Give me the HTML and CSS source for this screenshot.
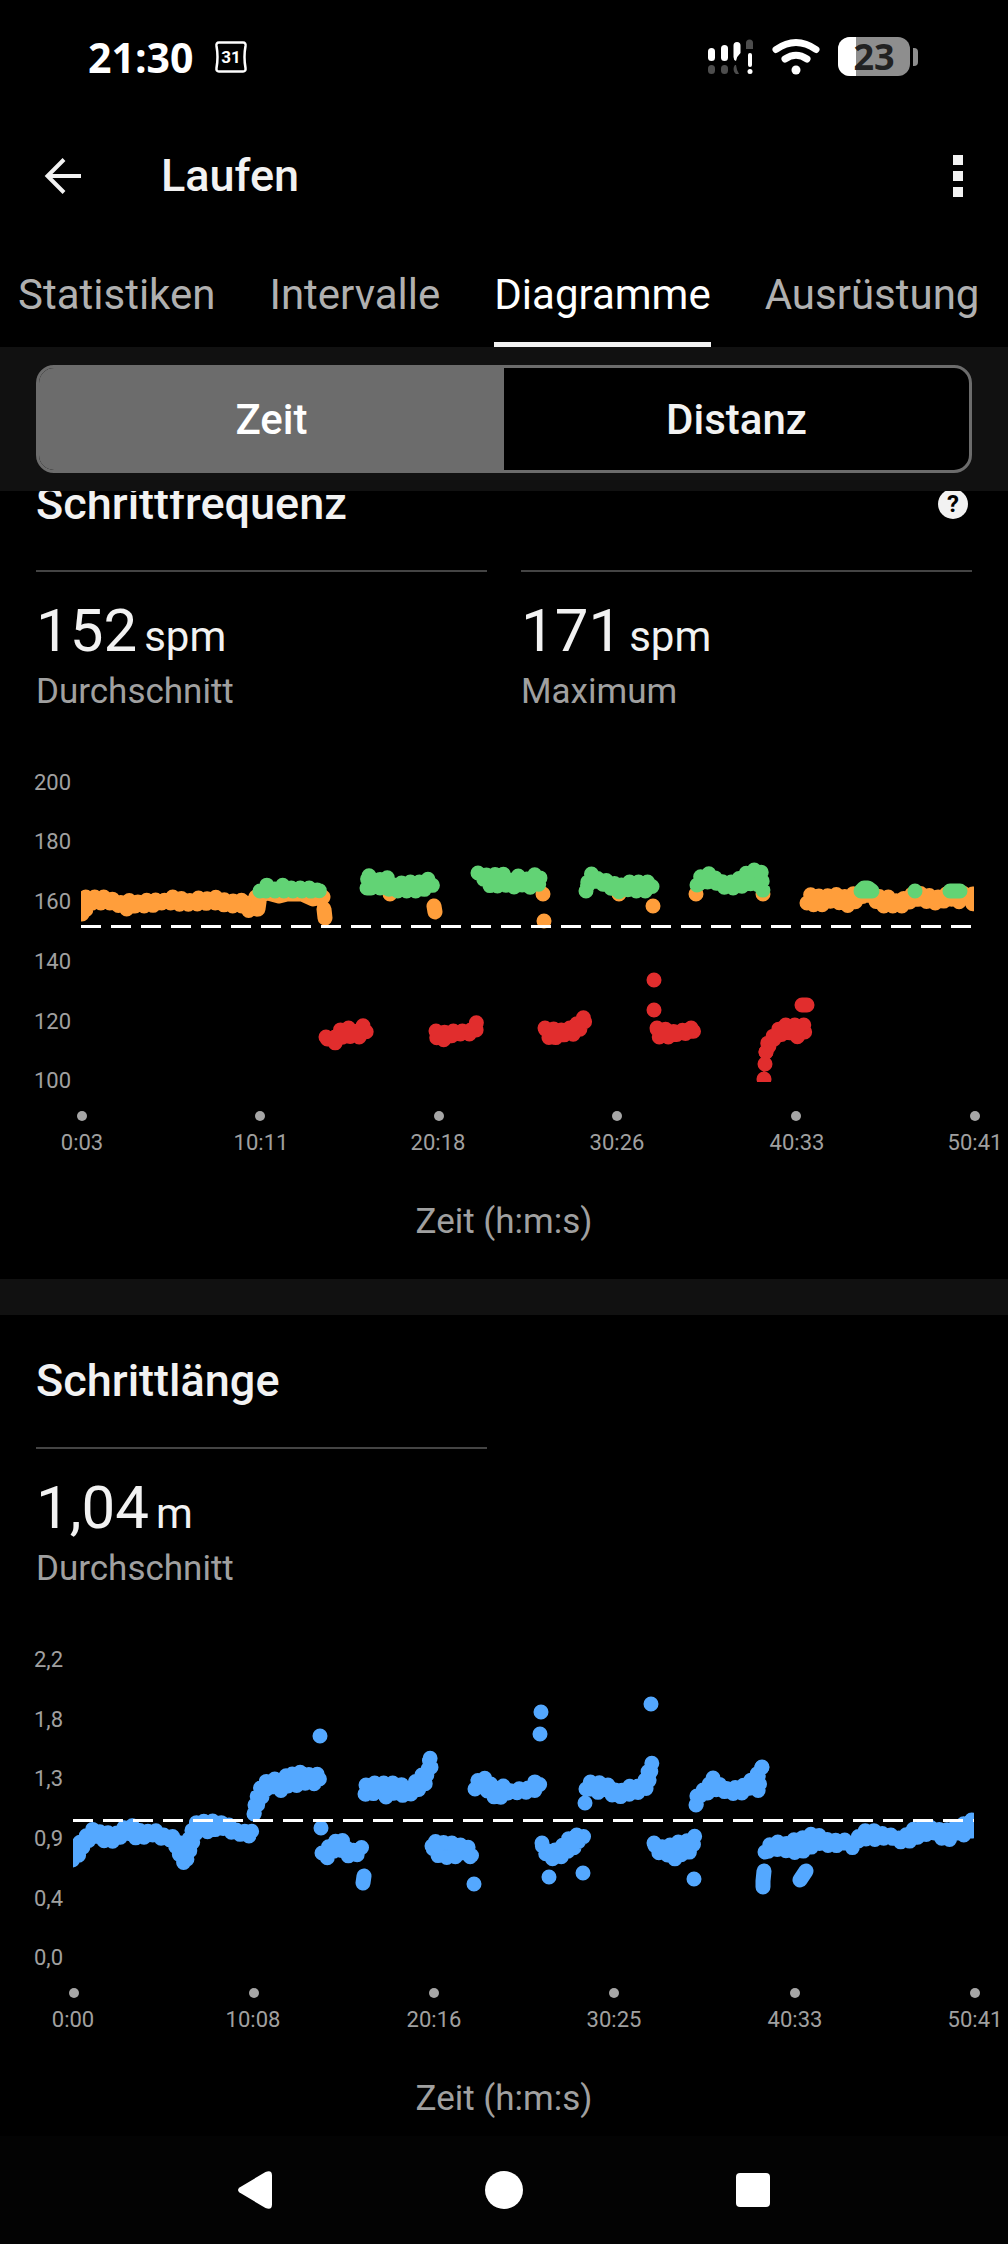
FILE: index.html
```html
<!DOCTYPE html>
<html lang="de">
<head>
    <meta charset="UTF-8">
    <meta name="viewport" content="width=device-width, initial-scale=1.0">
    <title>Laufen – Diagramme</title>
    <link rel="stylesheet" href="styles.css">
</head>
<body>
    <div class="top">
        <div class="status-bar">
            <span class="clock">21:30</span>
            <svg class="calendar" width="32" height="32" viewBox="0 0 32 32" aria-hidden="true">
                <path d="M4 1.500H28Q31 1.500 30.500 5Q28.500 16 30.500 27Q31 30.500 28 30.500H4Q1 30.500 1.500 27Q3.500 16 1.500 5Q1 1.500 4 1.500Z" fill="none" stroke="#fff" stroke-width="2.500"/>
                <text x="16" y="22" text-anchor="middle">31</text>
            </svg>
            <div class="status-icons">
                <svg width="46" height="36" viewBox="0 0 46 36" aria-hidden="true">
                    <g fill="#4d4d4d">
                        <rect x="0" y="26" width="7" height="9" rx="3.500"/>
                        <rect x="13" y="26" width="7" height="9" rx="3.500"/>
                        <path d="M27 26C25 28 25 33 28 35H31Q28.500 31 28 26Z"/>
                        <path d="M38 10V4a3.500 3.500 0 0 1 7 0v6Z"/>
                    </g>
                    <g fill="#fff">
                        <rect x="0" y="9" width="7" height="13" rx="3.500"/>
                        <rect x="13" y="6" width="7" height="16" rx="3.500"/>
                        <path d="M25.500 18V6.500a3.500 3.500 0 0 1 7 0V14Q29 17 28 22Q25.500 21 25.500 18Z"/>
                        <rect x="40" y="14" width="4" height="14" rx="2"/>
                        <circle cx="42" cy="32.500" r="2.500"/>
                    </g>
                </svg>
                <svg width="48" height="36" viewBox="0 0 48 36" aria-hidden="true">
                    <g fill="none" stroke="#fff" stroke-width="7" stroke-linecap="round">
                        <path d="M4 10.500Q24 -3.500 44 10.500"/>
                        <path d="M13 20Q24 12.500 35 20"/>
                    </g>
                    <circle cx="24" cy="31" r="4.500" fill="#fff"/>
                </svg>
                <svg class="battery" width="82" height="40" viewBox="0 0 82 40" aria-hidden="true">
                    <rect x="0" y="0" width="72" height="39" rx="12" fill="#8e8e8e"/>
                    <path d="M18 0H12A12 12 0 0 0 0 12V27A12 12 0 0 0 12 39H18Z" fill="#fff"/>
                    <path d="M75 11h1q4 0 4 4v10q0 4 -4 4h-1Z" fill="#8e8e8e"/>
                    <text x="36" y="33" text-anchor="middle">23</text>
                </svg>
            </div>
        </div>

        <header class="app-bar">
            <button class="icon-button" aria-label="Zurück">
                <svg width="36" height="36" viewBox="0 0 36 36" fill="none" stroke="#f2f2f2" stroke-width="4">
                    <path d="M19 1.500L2.500 18L19 34.500M3 18H36"/>
                </svg>
            </button>
            <h1>Laufen</h1>
            <button class="icon-button" aria-label="Menü">
                <svg width="10" height="42" viewBox="0 0 10 42" fill="#f2f2f2">
                    <path d="M0 0h10v10H0ZM0 16h10v10H0ZM0 32h10v10H0Z"/>
                </svg>
            </button>
        </header>

        <nav class="tabs">
            <a href="#">Statistiken</a>
            <a href="#">Intervalle</a>
            <a href="#" class="active">Diagramme</a>
            <a href="#">Ausrüstung</a>
        </nav>

        <div class="toggle-bar">
            <div class="toggle">
                <button class="selected">Zeit</button>
                <button>Distanz</button>
            </div>
        </div>
    </div>

    <main>
        <section class="panel">
            <div class="panel-title">
                <h2>Schrittfrequenz</h2>
                <button class="help" aria-label="Hilfe">?</button>
            </div>
            <div class="metrics">
                <div class="metric">
                    <div class="value">152<span>spm</span></div>
                    <div class="label">Durchschnitt</div>
                </div>
                <div class="metric">
                    <div class="value">171<span>spm</span></div>
                    <div class="label">Maximum</div>
                </div>
            </div>
            <figure class="chart">
                <svg viewBox="0 0 1008 430">
                    <clipPath id="plot-cadence"><rect x="81" y="30" width="893" height="312"/></clipPath>
                    <g class="axis">
                        <text x="34" y="50">200</text>
                        <text x="34" y="109">180</text>
                        <text x="34" y="169">160</text>
                        <text x="34" y="229">140</text>
                        <text x="34" y="289">120</text>
                        <text x="34" y="348">100</text>
                    </g>
                    <g clip-path="url(#plot-cadence)">
                        <g class="series orange">
                            <path d="M82 174L85 157L98 157L106 157L115 160L122 163L131 160L138 162L148 160L157 160L163 161L172 157L178 157L187 161L192 160L202 157L208 159L217 157L225 160L230 160L236 162L241 160L248 164L258 155L258 168L250 172L245 166L227 166L219 163L210 163L200 164L190 164L182 165L175 163L160 163L151 166L135 166L127 169L120 166L112 163L92 163Z"/>
                            <path class="dots" d="M258 169L260 155L268 153L279 156L287 154L302 154L313 159L323 157M324 169L325 178"/>
                            <path class="dots" d="M390 154h0M434 166L435 172M543 154h0M544 181h0M619 154h0M653 166h0M696 154h0M763 154h0"/>
                            <path d="M807 163L811 154L823 157L835 154L843 157L852 154L860 152L867 152L872 154L881 157L890 157L898 162L906 157L915 153L924 154L935 157L941 157L950 152L968 154L976 154L976 165L974 165L966 157L957 163L950 158L940 163L930 163L923 160L915 159L903 166L895 166L884 166L875 161L867 153L858 160L849 166L841 163L831 161L819 166Z"/>
                        </g>
                        <g class="series green">
                            <path d="M260 151L267 145L275 149L282 145L290 148L310 148L315 151L322 148L318 152L310 151Z"/>
                            <path d="M367 148L368 133L372 144L386 136L393 145L406 142L420 142L429 139L433 145L428 148L420 151L395 151L385 148Z"/>
                            <path d="M478 133L483 133L488 136L502 133L510 140L518 136L527 139L538 133L542 143L528 148L520 144L512 148L503 144L492 148L486 141L480 136Z"/>
                            <path d="M586 151L588 141L592 133L598 139L604 140L613 142L618 147L626 142L652 142L652 148L647 151L635 151L631 149L618 152L607 146L595 141L588 144Z"/>
                            <path d="M697 145L701 136L712 133L717 141L725 142L735 142L742 136L751 130L761 130L762 139L763 151L756 142L747 145L735 148L726 148L720 145L714 142L703 142Z"/>
                            <path class="dots" d="M861 151L864 148L868 148L872 151ZM915 151h0M950 151H960"/>
                        </g>
                        <g class="series red">
                            <path d="M326 297L335 297L342 288L350 288L355 292L364 285L367 291L360 297L352 297L345 295L335 303L328 300Z"/>
                            <path d="M436 291L442 293L448 291L470 291L477 282L476 291L473 294L455 294L443 300L437 300Z"/>
                            <path d="M545 288L552 288L558 292L565 288L573 288L580 280L586 276L584 284L576 294L562 295L550 300Z"/>
                            <path d="M657 288L664 288L669 292L680 291L691 288L696 288L695 290L690 294L681 293L670 297L658 297Z"/>
                            <path d="M766 312L768 302L775 294L782 285L794 285L805 285L806 291L798 297L791 293L784 292L779 297L772 300Z"/>
                            <path class="dots" d="M654 240h0M654 270h0M764 339h0M765 324h0M766 312h0M802 265H807"/>
                        </g>
                    </g>
                    <path class="average" d="M81 186.500H974"/>
                    <g class="ticks">
                        <circle cx="82" cy="376" r="5"/>
                        <circle cx="260" cy="376" r="5"/>
                        <circle cx="439" cy="376" r="5"/>
                        <circle cx="617" cy="376" r="5"/>
                        <circle cx="796" cy="376" r="5"/>
                        <circle cx="975" cy="376" r="5"/>
                    </g>
                    <g class="axis axis-x">
                        <text x="82" y="410">0:03</text>
                        <text x="261" y="410">10:11</text>
                        <text x="438" y="410">20:18</text>
                        <text x="617" y="410">30:26</text>
                        <text x="797" y="410">40:33</text>
                        <text x="975" y="410">50:41</text>
                    </g>
                </svg>
                <figcaption>Zeit (h:m:s)</figcaption>
            </figure>
        </section>

        <section class="panel">
            <div class="panel-title">
                <h2>Schrittlänge</h2>
            </div>
            <div class="metrics">
                <div class="metric">
                    <div class="value">1,04<span>m</span></div>
                    <div class="label">Durchschnitt</div>
                </div>
            </div>
            <figure class="chart">
                <svg viewBox="0 0 1008 430">
                    <clipPath id="plot-stride"><rect x="73" y="30" width="901" height="312"/></clipPath>
                    <g class="axis">
                        <text x="34" y="50">2,2</text>
                        <text x="34" y="110">1,8</text>
                        <text x="34" y="169">1,3</text>
                        <text x="34" y="229">0,9</text>
                        <text x="34" y="289">0,4</text>
                        <text x="34" y="348">0,0</text>
                    </g>
                    <g class="series blue" clip-path="url(#plot-stride)">
                        <path d="M74 232L81 224L88 217L94 211L103 217L111 215L117 216L123 211L131 208L137 212L144 216L153 212L163 218L175 220L180 228L185 236L191 215L198 203L207 205L213 204L219 206L226 205L233 212L243 215L251 212L253 219L249 219L233 216L220 210L209 216L203 211L198 210L191 230L185 248L180 239L175 228L171 223L163 222L153 218L137 222L130 216L122 219L115 224L106 225L97 219L90 222L83 230L76 243L72 243Z"/>
                        <path d="M254 197L255 188L258 176L262 168L268 163L275 162L282 167L288 155L294 158L299 155L307 157L313 159L320 156L319 166L312 167L303 166L293 170L288 169L282 174L275 171L269 168L263 178L258 187Z"/>
                        <path d="M322 236L327 231L333 226L340 221L343 224L349 235L361 230L362 231L357 238L347 239L340 232L334 234L327 241L323 238Z"/>
                        <path d="M365 177L366 168L374 166L383 166L394 166L403 168L411 171L416 164L424 156L430 150L429 138L431 144L431 151L427 157L425 168L420 172L415 174L408 179L400 178L393 176L386 180L380 172L370 179Z"/>
                        <path d="M432 229L433 223L440 227L447 224L457 228L467 228L470 234L473 243L466 235L462 236L453 241L443 240L436 238Z"/>
                        <path d="M475 172L477 165L480 160L488 162L494 173L502 168L509 174L517 172L528 171L537 163L540 165L539 172L530 175L512 176L505 176L498 183L488 175L483 167Z"/>
                        <path d="M542 226L545 233L553 234L561 230L568 222L575 218L584 218L582 225L577 224L572 235L567 234L561 240L551 242L543 234Z"/>
                        <path d="M586 172L589 165L604 166L612 170L618 176L628 169L637 170L645 163L649 152L652 146L650 160L647 171L640 175L630 177L619 180L613 179L607 172L599 176L593 172Z"/>
                        <path d="M654 226L665 231L675 225L685 225L695 219L693 230L690 235L683 236L676 243L671 238L665 238L657 235Z"/>
                        <path d="M696 188L697 178L700 175L708 170L712 160L719 167L724 172L732 170L738 171L746 167L755 160L762 150L757 162L760 168L760 174L750 171L740 177L728 176L718 172L708 176L701 177Z"/>
                        <path d="M765 235L767 230L773 225L783 225L788 227L793 223L801 221L806 220L813 216L823 220L830 224L837 223L845 223L851 227L858 220L866 213L878 214L885 218L895 218L900 222L906 218L915 211L924 210L937 211L943 215L950 211L960 209L970 203L976 203L976 212L964 218L957 215L948 224L941 221L933 215L922 219L918 220L911 224L899 225L892 221L885 221L872 223L861 221L852 231L845 226L832 230L821 226L815 228L808 232L799 236L790 235L780 232Z"/>
                        <path class="dots" d="M320 119h0M321 211h0M364 259L363 266M474 267h0M541 95h0M540 117h0M549 260h0M583 256h0M651 87h0M585 186h0M694 262h0M762 150h0M764 254L763 264L763 270M800 263L806 254"/>
                    </g>
                    <path class="average" d="M73 203.500H974"/>
                    <g class="ticks">
                        <circle cx="74" cy="376" r="5"/>
                        <circle cx="254" cy="376" r="5"/>
                        <circle cx="434" cy="376" r="5"/>
                        <circle cx="614" cy="376" r="5"/>
                        <circle cx="795" cy="376" r="5"/>
                        <circle cx="975" cy="376" r="5"/>
                    </g>
                    <g class="axis axis-x">
                        <text x="73" y="410">0:00</text>
                        <text x="253" y="410">10:08</text>
                        <text x="434" y="410">20:16</text>
                        <text x="614" y="410">30:25</text>
                        <text x="795" y="410">40:33</text>
                        <text x="975" y="410">50:41</text>
                    </g>
                </svg>
                <figcaption>Zeit (h:m:s)</figcaption>
            </figure>
        </section>
    </main>

    <nav class="system-nav">
        <button aria-label="Zurück">
            <svg width="38" height="38" viewBox="0 0 38 38" fill="#fff"><path d="M3.500 16.500L29.500 1Q36 -1.500 36 4.500V33.500Q36 39.500 29.500 37L3.500 21.500Q0.500 19 3.500 16.500Z"/></svg>
        </button>
        <button aria-label="Startseite">
            <svg width="38" height="38" viewBox="0 0 38 38" fill="#fff"><circle cx="19" cy="19" r="19"/></svg>
        </button>
        <button aria-label="Übersicht">
            <svg width="38" height="38" viewBox="0 0 38 38" fill="#fff"><rect x="2" y="2" width="34" height="34" rx="4"/></svg>
        </button>
    </nav>
</body>
</html>
```
FILE: styles.css
```css
* {
    box-sizing: border-box;
}
body {
    margin: 0;
    background: #000;
    color: #f2f2f2;
    font-family: Roboto, sans-serif;
}
h1, h2 {
    margin: 0;
    font-size: 45px;
    line-height: 52px;
    font-weight: 500;
}
button {
    padding: 0;
    border: none;
    background: none;
    color: inherit;
    font: inherit;
    cursor: pointer;
}
svg {
    display: block;
    overflow: visible;
}

/* Fixed part above the scrolling charts */
.top {
    position: sticky;
    top: 0;
    z-index: 1;
    background: #000;
}
.status-bar {
    display: flex;
    align-items: center;
    height: 114px;
    padding: 0 88px;
    color: #fff;
}
.clock {
    font-family: "Open Sans", sans-serif;
    font-size: 41px;
    font-weight: 700;
}
.calendar {
    margin-left: 22px;
}
.calendar text {
    fill: #fff;
    font-size: 17px;
    font-weight: 700;
}
.status-icons {
    display: flex;
    align-items: center;
    gap: 18px;
    margin-left: auto;
}
.battery text {
    fill: #222;
    font-family: "Open Sans", sans-serif;
    font-size: 36px;
    font-weight: 700;
}
.app-bar {
    display: flex;
    align-items: center;
    height: 124px;
    padding: 0 45px;
}
.app-bar h1 {
    flex: 1;
    margin-left: 80px;
}
.tabs {
    display: flex;
    gap: 54px;
    height: 109px;
    padding: 0 18px;
}
.tabs a {
    padding-top: 32px;
    color: #b0b0b0;
    font-size: 42px;
    line-height: 50px;
    text-decoration: none;
}
.tabs .active {
    border-bottom: 5px solid #f2f2f2;
    color: #fff;
}
.toggle-bar {
    padding: 18px 36px;
    background: #111;
}
.toggle {
    display: flex;
    height: 108px;
    border: 3px solid #6c6c6c;
    border-radius: 18px;
    background: #000;
    overflow: hidden;
}
.toggle button {
    flex: 1;
    font-size: 42px;
    font-weight: 500;
}
.toggle .selected {
    background: #6c6c6c;
    color: #fff;
}

/* Chart panels, the first one is scrolled partly under the toggle */
main {
    margin-top: -53px;
}
.panel {
    padding-top: 40px;
}
.panel + .panel {
    border-top: 36px solid #111;
}
.panel-title {
    display: flex;
    align-items: center;
    justify-content: space-between;
    padding: 0 36px;
}
.help {
    width: 30px;
    height: 30px;
    margin-right: 4px;
    border-radius: 50%;
    background: #f2f2f2;
    color: #000;
    font-size: 24px;
    font-weight: 700;
    line-height: 30px;
}
.metrics {
    display: grid;
    grid-template-columns: 1fr 1fr;
    gap: 34px;
    margin-top: 40px;
    padding: 0 36px;
}
.metric {
    border-top: 2px solid #444;
    padding-top: 22px;
}
.value {
    font-size: 60px;
    line-height: 74px;
}
.value span {
    margin-left: 7px;
    font-size: 42px;
    line-height: 1;
}
.label {
    color: #a0a0a0;
    font-size: 35px;
    line-height: 48px;
}
.chart {
    margin: 24px 0 0;
}
.chart svg {
    width: 100%;
}
.chart figcaption {
    padding: 31px 0 36px;
    color: #a0a0a0;
    font-size: 35px;
    line-height: 42px;
    text-align: center;
}
.panel:last-child figcaption {
    padding-bottom: 16px;
}

.axis {
    fill: #a0a0a0;
    font-size: 22px;
}
.axis-x {
    text-anchor: middle;
}
.ticks {
    fill: #a6a6a6;
}
.average {
    fill: none;
    stroke: #fff;
    stroke-width: 3;
    stroke-dasharray: 20 10;
}

/* Zero-length dashes with round caps draw the outline as single points */
.series {
    stroke-width: 15;
    stroke-linecap: round;
    stroke-linejoin: round;
    stroke-dasharray: 0 9;
}
.series .dots {
    fill: none;
    stroke-dasharray: none;
}
.orange {
    fill: #ff9e3b;
    stroke: #ff9e3b;
}
.green {
    fill: #62d375;
    stroke: #62d375;
}
.red {
    fill: #e12d2d;
    stroke: #e12d2d;
}
.blue {
    fill: #54a8ff;
    stroke: #54a8ff;
}

.system-nav {
    position: sticky;
    bottom: 0;
    display: flex;
    height: 108px;
    padding: 0 130px;
    background: #030303;
}
.system-nav button {
    display: flex;
    flex: 1;
    align-items: center;
    justify-content: center;
}
```
